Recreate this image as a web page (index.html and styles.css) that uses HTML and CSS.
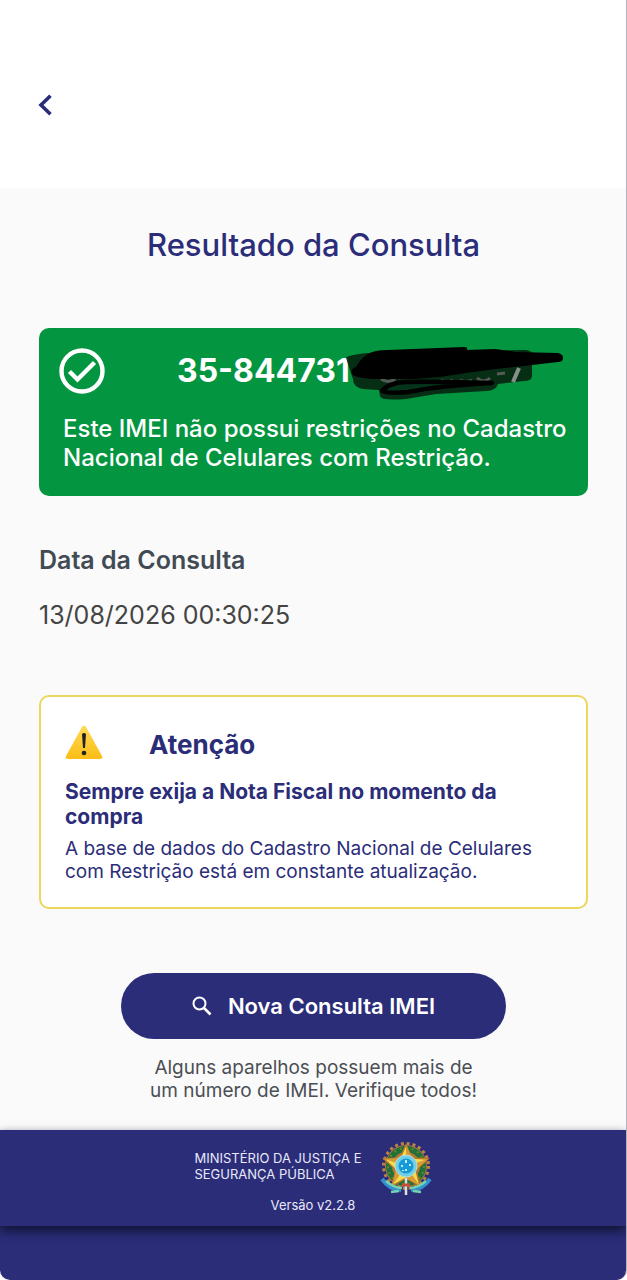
FILE: index.html
```
<!DOCTYPE html>
<html lang="pt-BR">

<head>
    <meta charset="UTF-8">
    <meta name="viewport" content="width=device-width, initial-scale=1">
    <title>Resultado da Consulta</title>
    <link rel="stylesheet" href="styles.css">
</head>

<body>
    <div class="screen">
        <header class="topbar">
            <button type="button" class="back-btn" aria-label="Voltar">
                <svg width="14" height="22" viewBox="0 0 14 22">
                    <path d="M12.500 1.800 3 11l9.500 9.200" fill="none" stroke="currentColor" stroke-width="3.600" />
                </svg>
            </button>
        </header>

        <main class="content">
            <h1 class="title">Resultado da Consulta</h1>

            <section class="result-card">
                <div class="result-head">
                    <svg class="check-icon" width="46" height="46" viewBox="0 0 46 46" fill="none" stroke="#fff" stroke-width="4.400">
                        <circle cx="23" cy="23" r="20.500" />
                        <path d="M10.500 23.500 18.500 31.500 35.500 14.500" />
                    </svg>
                    <div class="imei">
                        <span>35-844731</span>
                        <svg class="scribble" width="218" height="56" viewBox="0 0 218 56">
                            <path d="M0 10q1-3 22-5L178 2q8 0 8 4v22q0 5-8 5l-26 3q-2 7-12 7l-50 3-30 5q-26 2-26-3l-1-6-16-1q-10-2-10-10z" fill="#06200f" opacity=".88" />
                            <path d="M35 31q8 5 14 0M95 32q6 3 12 0M114 32q6 3 12 0M131 30q7 6 13 0M151 26l8-1" fill="none" stroke="#555a56" stroke-width="3" />
                            <path d="M173 20l-6 14" stroke="#8a8f8a" stroke-width="4" />
                            <path d="M22 6q6-4 20-4l76-3q4 0 3 3l28-1q10 1 20 3l43 1q5 1 5 5t-5 4l-26 3-36 4-30 4-26 4-26 2H28q-20-1-22-5-2-5 4-7 4-8 12-13z" fill="#000" />
                            <path d="M36 43q6-8 24-9t86 1q-20 1-42 3t-42 6q-18 2-26-1z" fill="#04351a" stroke="#000" stroke-width="4.500" stroke-linejoin="round" />
                        </svg>
                    </div>
                </div>
                <p class="result-text">Este IMEI não possui restrições no Cadastro Nacional de Celulares com Restrição.</p>
            </section>

            <dl class="date">
                <dt>Data da Consulta</dt>
                <dd>13/08/2026 00:30:25</dd>
            </dl>

            <section class="warning-card">
                <div class="warning-head">
                    <svg width="38" height="34" viewBox="0 0 38 34">
                        <defs>
                            <linearGradient id="yellow" x1="0" y1="0" x2="0" y2="1">
                                <stop offset="0" stop-color="#ffda57" />
                                <stop offset="1" stop-color="#fbbd16" />
                            </linearGradient>
                        </defs>
                        <path d="M17 2q2-3 4 0l16 29q1 3-2 3H3q-3 0-2-3z" fill="url(#yellow)" />
                        <path d="M17 9q2-2 4 0l-1 14h-2z" fill="#222" />
                        <circle cx="19" cy="28" r="2.300" fill="#222" />
                    </svg>
                    <h2>Atenção</h2>
                </div>
                <p class="warning-strong">Sempre exija a Nota Fiscal no momento da compra</p>
                <p class="warning-text">A base de dados do Cadastro Nacional de Celulares com Restrição está em constante atualização.</p>
            </section>

            <div class="actions">
                <button type="button" class="new-btn">
                    <svg width="20" height="20" viewBox="0 0 20 20" fill="none" stroke="currentColor">
                        <circle cx="7.500" cy="7.500" r="6" stroke-width="2" />
                        <path d="m12 12 6.500 6.500" stroke-width="2.600" />
                    </svg>
                    Nova Consulta IMEI
                </button>
                <p class="hint">Alguns aparelhos possuem mais de<br>um número de IMEI. Verifique todos!</p>
            </div>
        </main>

        <footer class="footer">
            <div class="footer-panel">
                <div class="ministry">
                    <p>MINISTÉRIO DA JUSTIÇA E<br>SEGURANÇA PÚBLICA</p>
                    <svg width="52" height="54" viewBox="0 0 52 54">
                        <!-- wreath -->
                        <circle cx="26" cy="24" r="22.500" fill="none" stroke="#b98545" stroke-width="3" stroke-dasharray="3 2.890" />
                        <circle cx="26" cy="24" r="21" fill="#b77a35" />
                        <circle cx="26" cy="24" r="17" fill="none" stroke="#21703a" stroke-width="6" />
                        <circle cx="26" cy="24" r="18" fill="none" stroke="#66852f" stroke-width="2" stroke-dasharray="2 4" />
                        <!-- star -->
                        <path d="M26 3l6 13 16 1-12 11 4 16-14-8-14 8 4-16L4 17l16-1z" fill="#f5dc4c" stroke="#bd772b" stroke-width="1.500" />
                        <path d="M26 3v21l6-8zM48 17 26 24l10 4zM40 44 26 24v12zM12 44l14-20-10 4zM4 17l22 7-6-8z" fill="#d79a35" />
                        <circle cx="26" cy="24" r="11" fill="#72cfe6" stroke="#b6e1cf" />
                        <circle cx="26" cy="24" r="7.500" fill="#159bd7" />
                        <path d="M26 18v3M22 23v2M30 22v2M26 27v2M23 28v1" stroke="#fff" stroke-width="1.500" />
                        <!-- ribbon and sword -->
                        <path d="M2 37q8 11 19 11M50 37q-8 11-19 11" fill="none" stroke="#318fd2" stroke-width="4" />
                        <path d="M6 39q8 7 16 7M46 39q-8 7-16 7M11 50l8-1M41 50l-8-1" fill="none" stroke="#77d2ab" stroke-width="2.500" />
                        <path d="M26 36v17" stroke="#d9e2df" stroke-width="2.500" />
                        <path d="M22 43h8" stroke="#c44f38" stroke-width="3" />
                    </svg>
                </div>
                <p class="version">Versão v2.2.8</p>
            </div>
        </footer>
    </div>
</body>

</html>
```
FILE: styles.css
```
* {
    box-sizing: border-box;
}

body {
    margin: 0;
    background: #fff;
    font-family: Inter, "Liberation Sans", sans-serif;
    color: #2b2d79;
}

h1,
h2,
p,
dl,
dd {
    margin: 0;
}

button {
    border: none;
    cursor: pointer;
    font-family: inherit;
}

svg {
    flex-shrink: 0;
}

.screen {
    display: flex;
    flex-direction: column;
    min-height: 100vh;
    border-right: 1px solid #b4b4b8;
    border-radius: 0 0 10px 10px;
    overflow: hidden;
}

.topbar {
    padding: 86px 30px 64px;
    background: #fff;
}

.back-btn {
    display: flex;
    padding: 8px;
    background: none;
    color: #2b2d79;
}

.content {
    flex: 1;
    padding: 37px 38px 28px 39px;
    background: #fafafa;
}

.title {
    font-size: 31px;
    line-height: 40px;
    font-weight: 550;
    text-align: center;
}

.result-card {
    margin-top: 63px;
    padding: 20px 12px 24px 20px;
    border-radius: 10px;
    background: #03953f;
    color: #fff;
}

.result-head {
    display: flex;
    align-items: center;
    gap: 72px;
}

.imei {
    position: relative;
    font-size: 32px;
    line-height: 46px;
    font-weight: 700;
}

/* drawn over the end of the number */
.scribble {
    position: absolute;
    left: 98%;
    top: 0;
    overflow: visible;
}

.result-text {
    margin: 20px 0 0 4px;
    font-size: 24px;
    line-height: 29px;
    font-weight: 550;
}

.date {
    margin-top: 48px;
    font-size: 25px;
    line-height: 32px;
    color: #424b54;
}

.date dt {
    font-weight: 600;
}

.date dd {
    margin-top: 23px;
    color: #444;
}

.warning-card {
    margin-top: 64px;
    padding: 28px 24px 24px;
    border: 2px solid #ecd75c;
    border-radius: 10px;
    background: #fff;
}

.warning-head {
    display: flex;
    align-items: flex-start;
    gap: 46px;
}

.warning-head h2 {
    font-size: 26px;
    line-height: 40px;
    font-weight: 700;
}

.warning-strong {
    margin-top: 14px;
    font-size: 21px;
    line-height: 25px;
    font-weight: 700;
}

.warning-text {
    margin-top: 8px;
    font-size: 19px;
    line-height: 23px;
}

.actions {
    display: flex;
    flex-direction: column;
    align-items: center;
    margin-top: 64px;
}

.new-btn {
    display: flex;
    align-items: center;
    justify-content: center;
    gap: 16px;
    width: 70%;
    padding: 18px;
    border-radius: 33px;
    background: #2b2d79;
    color: #fff;
    font-size: 22px;
    line-height: 30px;
    font-weight: 600;
}

.hint {
    margin-top: 17px;
    font-size: 19px;
    line-height: 23px;
    color: #4b4f54;
    text-align: center;
}

.footer {
    padding-bottom: 54px;
    background: #2b2d79;
    color: #e9e9fa;
}

.footer-panel {
    padding: 12px 0;
    background: #2b2d79;
    box-shadow: 0 5px 10px #111333;
}

.ministry {
    display: flex;
    justify-content: center;
    gap: 18px;
}

.ministry p {
    padding-top: 8px;
    font-size: 13px;
    line-height: 16px;
}

.version {
    font-size: 13px;
    line-height: 18px;
    text-align: center;
}
```
